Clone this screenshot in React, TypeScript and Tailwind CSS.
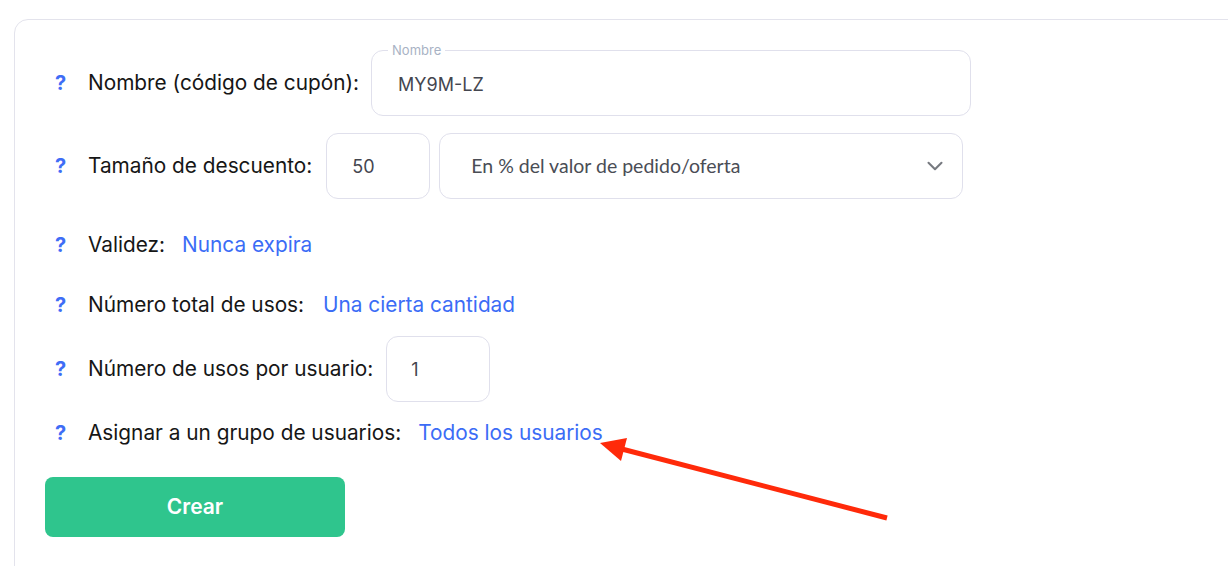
import { ChevronDown } from "lucide-react"

const Help = () => (
  <span className="w-[43px] shrink-0 pl-[10px] text-[20px] font-bold text-[#3f6df6]">?</span>
)

const Label = ({ children }: { children: React.ReactNode }) => (
  <span className="text-[20.8px] text-[#161616] whitespace-nowrap">{children}</span>
)

const Link = ({ children }: { children: React.ReactNode }) => (
  <span className="text-[20.8px] text-[#3b6cf6] whitespace-nowrap">{children}</span>
)

export default function App() {
  return (
    <div className="relative h-[566px] w-[1228px] overflow-hidden bg-white font-['Inter',sans-serif]">
      <div className="ml-[14px] mt-[19px] h-[600px] w-[1260px] rounded-[14px] border border-[#e3e3ec] pl-[30px] pt-[30px]">
        {/* nombre */}
        <div className="flex h-[66px] items-center">
          <Help />
          <Label>Nombre (código de cupón):</Label>
          <fieldset className="ml-[12px] -mt-[8px] h-[74px] w-[600px] rounded-[12px] border border-[#e0e0ec] pl-[16px]">
            <legend className="px-[4px] text-[13px] leading-[16px] text-[#a8b2c4]">Nombre</legend>
            <div className="pl-[10px] pt-[15px] text-[18px] leading-[24px] text-[#44464f]">MY9M-LZ</div>
          </fieldset>
        </div>

        {/* descuento */}
        <div className="mt-[17px] flex h-[66px] items-center">
          <Help />
          <Label>Tamaño de descuento:</Label>
          <div className="ml-[14px] flex h-[66px] w-[104px] items-center rounded-[12px] border border-[#e0e0ec] pl-[25px] text-[18px] text-[#44464f]">
            50
          </div>
          <div className="ml-[9px] flex h-[66px] w-[524px] items-center justify-between rounded-[12px] border border-[#e0e0ec] pl-[31px] pr-[14px] font-['Lato',sans-serif] text-[19.5px] text-[#4a4d55]">
            <span>En % del valor de pedido/oferta</span>
            <ChevronDown size={26} strokeWidth={1.9} className="text-[#777a80]" />
          </div>
        </div>

        {/* validez */}
        <div className="mt-[31px] flex h-[30px] items-center">
          <Help />
          <Label>Validez:</Label>
          <span className="ml-[17px]">
            <Link>Nunca expira</Link>
          </span>
        </div>

        {/* usos total */}
        <div className="mt-[30px] flex h-[30px] items-center">
          <Help />
          <Label>Número total de usos:</Label>
          <span className="ml-[19px]">
            <Link>Una cierta cantidad</Link>
          </span>
        </div>

        {/* usos por usuario */}
        <div className="mt-[16px] flex h-[66px] items-center">
          <Help />
          <Label>Número de usos por usuario:</Label>
          <div className="ml-[13px] flex h-[66px] w-[104px] items-center rounded-[12px] border border-[#e0e0ec] pl-[24px] text-[18px] text-[#44464f]">
            1
          </div>
        </div>

        {/* grupo */}
        <div className="mt-[16px] flex h-[30px] items-center">
          <Help />
          <Label>Asignar a un grupo de usuarios:</Label>
          <span className="ml-[17px]">
            <Link>Todos los usuarios</Link>
          </span>
        </div>

        <button className="mt-[29px] h-[60px] w-[300px] rounded-[8px] bg-[#2fc58d] text-[21px] font-semibold text-white">
          Crear
        </button>
      </div>

      {/* annotation arrow */}
      <svg className="pointer-events-none absolute left-0 top-0" width="1228" height="566">
        <line x1="887" y1="518" x2="618" y2="448" stroke="#ff2a0a" strokeWidth="5" />
        <polygon points="600,443 627,438 621,461" fill="#ff2a0a" />
      </svg>
    </div>
  )
}
